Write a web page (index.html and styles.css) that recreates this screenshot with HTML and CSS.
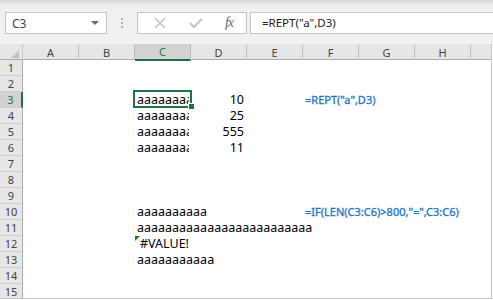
FILE: index.html
```html
<!DOCTYPE html>
<html lang="en">
<head>
  <meta charset="UTF-8" />
  <title>REPT - Excel</title>
  <link rel="stylesheet" href="styles.css">
</head>
<body>

<div class="toolbar">
  <div class="name-box">
    <span>C3</span>
    <span class="drop"></span>
  </div>
  <div class="grip"><i></i><i></i><i></i></div>
  <div class="fx-buttons">
    <svg class="btn" width="14" height="14" viewBox="0 0 14 14"><path d="M2 2 L12 12 M12 2 L2 12" stroke="#c4c4c4" stroke-width="1.6" fill="none"/></svg>
    <svg class="btn" width="16" height="14" viewBox="0 0 16 14"><path d="M2 7 L6 11 L14 3" stroke="#c4c4c4" stroke-width="2" fill="none"/></svg>
    <span class="fx">fx</span>
  </div>
  <div class="formula-box">=REPT("a",D3)</div>
</div>

<div class="sheet">
  <div class="row head">
    <div class="corner"><span></span></div>
    <div class="ch">A</div>
    <div class="ch">B</div>
    <div class="ch active">C</div>
    <div class="ch">D</div>
    <div class="ch">E</div>
    <div class="ch">F</div>
    <div class="ch">G</div>
    <div class="ch">H</div>
    <div class="ch"></div>
  </div>

  <div class="row"><div class="rh">1</div></div>
  <div class="row"><div class="rh">2</div></div>
  <div class="row">
    <div class="rh active">3</div>
    <div class="cell col-c selected"><span class="clip">aaaaaaaa</span><span class="handle"></span></div>
    <div class="cell col-d num">10</div>
    <div class="cell col-f formula">=REPT("a",D3)</div>
  </div>
  <div class="row">
    <div class="rh">4</div>
    <div class="cell col-c"><span class="clip">aaaaaaaa</span></div>
    <div class="cell col-d num">25</div>
  </div>
  <div class="row">
    <div class="rh">5</div>
    <div class="cell col-c"><span class="clip">aaaaaaaa</span></div>
    <div class="cell col-d num">555</div>
  </div>
  <div class="row">
    <div class="rh">6</div>
    <div class="cell col-c"><span class="clip">aaaaaaaa</span></div>
    <div class="cell col-d num">11</div>
  </div>
  <div class="row"><div class="rh">7</div></div>
  <div class="row"><div class="rh">8</div></div>
  <div class="row"><div class="rh">9</div></div>
  <div class="row">
    <div class="rh">10</div>
    <div class="cell col-c">aaaaaaaaaa</div>
    <div class="cell col-f formula">=IF(LEN(C3:C6)&gt;800,"=",C3:C6)</div>
  </div>
  <div class="row">
    <div class="rh">11</div>
    <div class="cell col-c">aaaaaaaaaaaaaaaaaaaaaaaaa</div>
  </div>
  <div class="row">
    <div class="rh">12</div>
    <div class="cell col-c error"><span class="flag"></span>#VALUE!</div>
  </div>
  <div class="row">
    <div class="rh">13</div>
    <div class="cell col-c">aaaaaaaaaaa</div>
  </div>
  <div class="row"><div class="rh">14</div></div>
  <div class="row"><div class="rh">15</div></div>
</div>

</body>
</html>
```

FILE: styles.css
```css
body {
  margin: 0;
  padding: 0;
  width: 493px;
  height: 300px;
  overflow: hidden;
  background: #ffffff;
  font-family: 'Noto Sans', 'DejaVu Sans', sans-serif;
}

.toolbar {
  height: 44px;
  box-sizing: border-box;
  padding: 12px 0 0 5px;
  display: flex;
  align-items: flex-start;
  background: linear-gradient(to bottom, #d6d6d6 0, #e9e9e9 4px, #f1f1f1 10px, #f1f1f1 100%);
}

.name-box {
  width: 102px;
  height: 22px;
  box-sizing: border-box;
  border: 1px solid #c6c6c6;
  background: #ffffff;
  display: flex;
  align-items: center;
  justify-content: space-between;
  padding: 0 7px 0 6px;
  font-size: 12px;
  color: #444444;
}

.drop {
  width: 0;
  height: 0;
  border-left: 4px solid transparent;
  border-right: 4px solid transparent;
  border-top: 4px solid #6a6a6a;
}

.grip {
  width: 30px;
  height: 22px;
  display: flex;
  flex-direction: column;
  align-items: center;
  justify-content: center;
  gap: 2px;
}

.grip i {
  width: 2px;
  height: 2px;
  background: #b4b4b4;
}

.fx-buttons {
  width: 110px;
  height: 22px;
  box-sizing: border-box;
  border: 1px solid #c6c6c6;
  background: #ffffff;
  display: flex;
  align-items: center;
  padding: 0 13px 0 15px;
  gap: 21px;
}

.fx {
  margin-left: auto;
  font-family: 'Liberation Serif', serif;
  font-style: italic;
  font-size: 14px;
  color: #6a6a6a;
  letter-spacing: -1px;
}

.formula-box {
  flex: 1;
  height: 22px;
  box-sizing: border-box;
  margin-left: 3px;
  border: 1px solid #c6c6c6;
  border-right: none;
  background: #ffffff;
  padding: 0 0 0 11px;
  font-size: 11.5px;
  line-height: 20px;
  color: #222222;
}

.sheet {
  width: 491px;
  height: 254px;
  border-right: 1px solid #c6c6c6;
  border-bottom: 1px solid #c6c6c6;
  overflow: hidden;
}

.row {
  display: grid;
  grid-template-columns: 23px repeat(9, 56px);
  height: 16px;
  font-size: 12.5px;
  line-height: 16px;
}

.row.head {
  background: #e6e6e6;
  height: 16px;
  box-sizing: border-box;
  border-bottom: 1px solid #ababab;
  font-size: 11px;
  line-height: 15px;
}

.corner {
  position: relative;
  border-right: 1px solid #c8c8c8;
}

.corner span {
  position: absolute;
  right: 3px;
  bottom: 2px;
  width: 0;
  height: 0;
  border-left: 8px solid transparent;
  border-bottom: 8px solid #c2c2c2;
}

.ch {
  text-align: center;
  color: #444444;
  border-right: 1px solid #bdbdbd;
  margin-top: 1px;
}

.ch.active {
  background: #d2d2d2;
  color: #217346;
  border-bottom: 2px solid #217346;
  margin-top: 0;
  margin-bottom: -1px;
}

.rh {
  grid-column: 1;
  background: #e6e6e6;
  border-right: 1px solid #ababab;
  border-bottom: 1px solid #cfcfcf;
  font-size: 11px;
  line-height: 15px;
  text-align: center;
  color: #444444;
}

.rh.active {
  background: #d2d2d2;
  color: #217346;
  border-right: 2px solid #217346;
}

.cell {
  grid-row: 1;
  padding: 0 2px;
  white-space: nowrap;
  color: #000000;
  position: relative;
}

.col-c { grid-column: 4; }
.col-d { grid-column: 5; }
.col-f { grid-column: 7; }

.clip {
  display: block;
  overflow: hidden;
}

.num {
  text-align: right;
  padding-right: 3px;
}

.formula {
  color: #1a74c9;
  font-size: 11px;
  -webkit-text-stroke: 0.3px #1a74c9;
}

.selected::before {
  content: "";
  position: absolute;
  left: -2px;
  top: -2px;
  right: -1px;
  bottom: 0;
  border: 2px solid #217346;
}

.handle {
  position: absolute;
  right: -4px;
  bottom: -2px;
  width: 5px;
  height: 5px;
  background: #217346;
  border: 1px solid #ffffff;
}

.error {
  padding-left: 5px;
}

.flag {
  position: absolute;
  left: 0;
  top: 0;
  width: 0;
  height: 0;
  border-top: 5px solid #1e7b22;
  border-right: 5px solid transparent;
}
```
